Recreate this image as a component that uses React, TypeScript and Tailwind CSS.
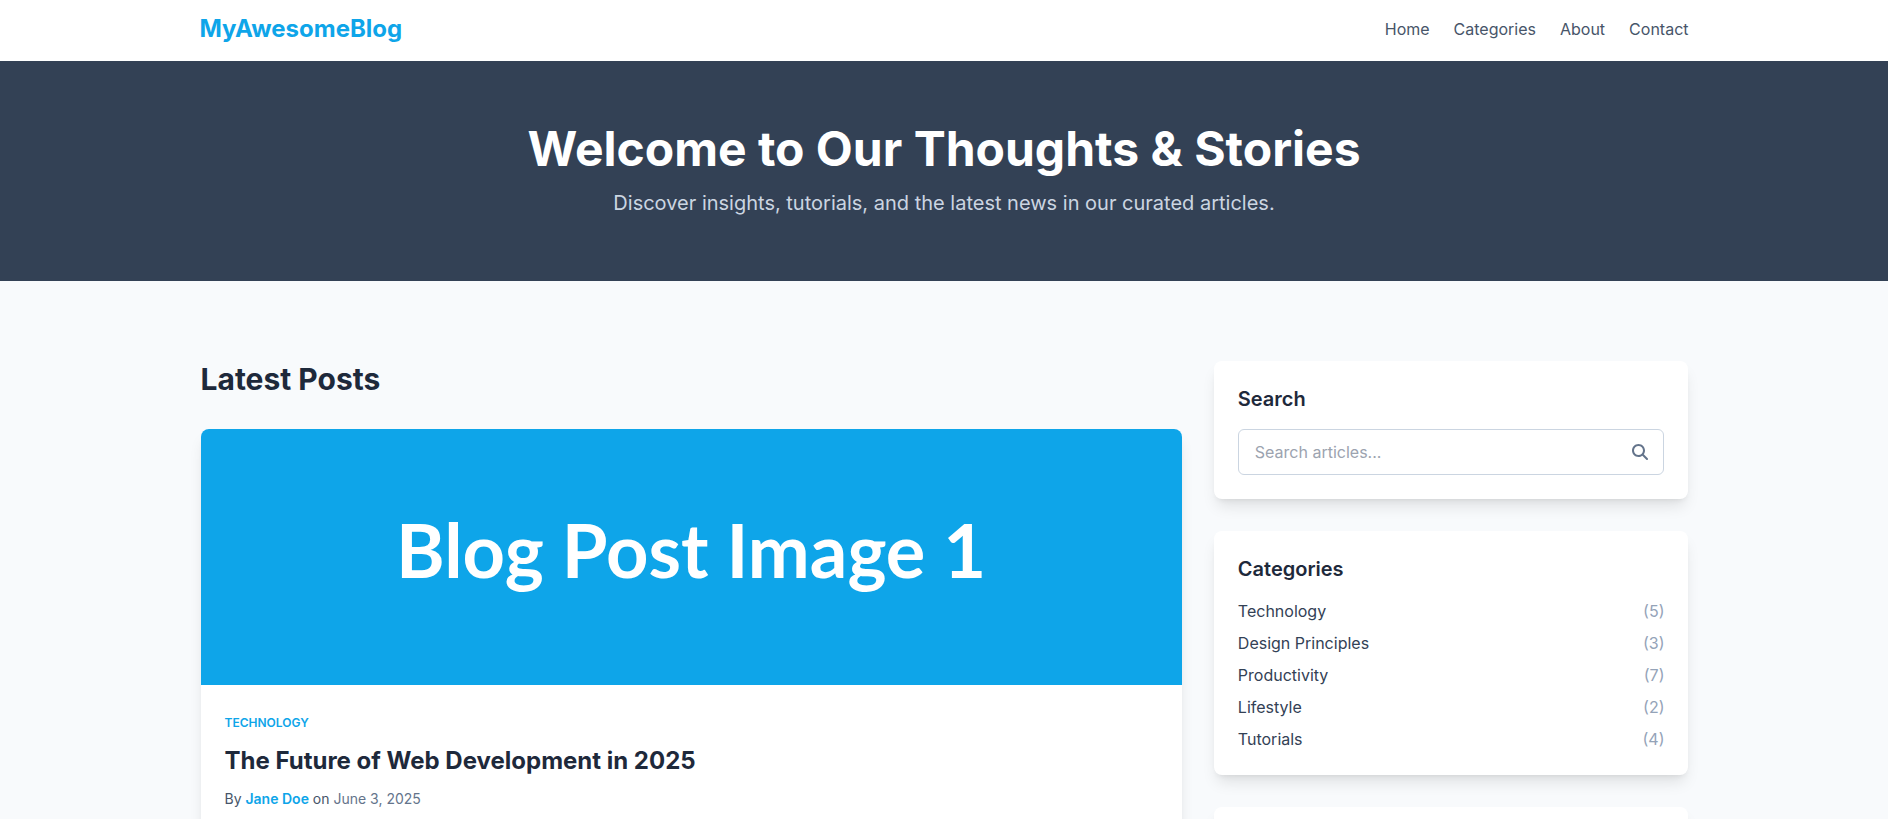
import React from 'react';
import { FaMagnifyingGlass } from 'react-icons/fa6';

const navLinks = ['Home', 'Categories', 'About', 'Contact'];

const categories = [
  { name: 'Technology', count: 5 },
  { name: 'Design Principles', count: 3 },
  { name: 'Productivity', count: 7 },
  { name: 'Lifestyle', count: 2 },
  { name: 'Tutorials', count: 4 },
];

interface SidebarCardProps {
  title?: string;
  children?: React.ReactNode;
}

const SidebarCard: React.FC<SidebarCardProps> = ({ title, children }) => (
  <section className="bg-white rounded-lg shadow-lg p-6">
    {title && <h3 className="text-xl font-semibold text-[#1e293b] mb-4">{title}</h3>}
    {children}
  </section>
);

const Header = () => (
  <header className="bg-white">
    <div className="max-w-[1537px] mx-auto px-6 pt-[13px] pb-4 flex items-center justify-between">
      <a href="#" className="text-2xl font-bold text-[#0ea5e9]">MyAwesomeBlog</a>
      <nav className="flex gap-6">
        {navLinks.map((link) => (
          <a key={link} href="#" className="text-[#475569] hover:text-[#0ea5e9]">{link}</a>
        ))}
      </nav>
    </div>
  </header>
);

const Hero = () => (
  <section className="bg-[#334155] text-center py-16 px-6">
    <h1 className="text-5xl font-bold text-white mb-4">Welcome to Our Thoughts &amp; Stories</h1>
    <p className="text-xl text-[#cbd5e1]">Discover insights, tutorials, and the latest news in our curated articles.</p>
  </section>
);

const PostCard = () => (
  <article className="bg-white rounded-lg shadow-lg overflow-hidden">
    <div className="h-64 pb-[14px] bg-[#0ea5e9] flex items-center justify-center">
      <span className="font-['Lato',sans-serif] font-bold text-white text-[74px] leading-none">Blog Post Image 1</span>
    </div>
    <div className="p-6">
      <div className="mb-3">
        <a href="#" className="text-xs font-semibold uppercase text-[#0ea5e9]">Technology</a>
      </div>
      <h2 className="text-2xl font-bold text-[#1e293b] mb-3">The Future of Web Development in 2025</h2>
      <p className="text-sm text-[#475569]">
        By <a href="#" className="font-semibold text-[#0ea5e9]">Jane Doe</a> on{' '}
        <time dateTime="2025-06-03" className="text-[#64748b]">June 3, 2025</time>
      </p>
    </div>
  </article>
);

const App = () => {
  return (
    <div className="h-screen overflow-hidden bg-[#f8fafc] font-['Inter',sans-serif] text-[#334155]">
      <Header />
      <Hero />
      <main className="max-w-[1537px] mx-auto pl-[25px] pr-6 py-20 grid grid-cols-3 gap-8">
        <div className="col-span-2">
          <h2 className="text-3xl font-bold text-[#1e293b] mb-8">Latest Posts</h2>
          <PostCard />
        </div>

        <aside className="space-y-8">
          <SidebarCard title="Search">
            <form className="relative" onSubmit={(e) => e.preventDefault()}>
              <input
                type="text"
                aria-label="Search articles"
                placeholder="Search articles..."
                className="block w-full rounded-md border border-[#cbd5e1] py-[10px] pl-4 pr-10 placeholder:text-[#9ca3af] focus:outline-none focus:border-[#0ea5e9]"
              />
              <button type="submit" aria-label="Search" className="absolute inset-y-0 right-4 flex items-center text-[#64748b]">
                <FaMagnifyingGlass className="w-4 h-4" />
              </button>
            </form>
          </SidebarCard>

          <SidebarCard title="Categories">
            <ul className="space-y-2">
              {categories.map((cat) => (
                <li key={cat.name} className="flex justify-between">
                  <a href="#" className="hover:text-[#0ea5e9]">{cat.name}</a>
                  <span className="text-[#94a3b8]">({cat.count})</span>
                </li>
              ))}
            </ul>
          </SidebarCard>

          <SidebarCard />
        </aside>
      </main>
    </div>
  );
};

export default App;
